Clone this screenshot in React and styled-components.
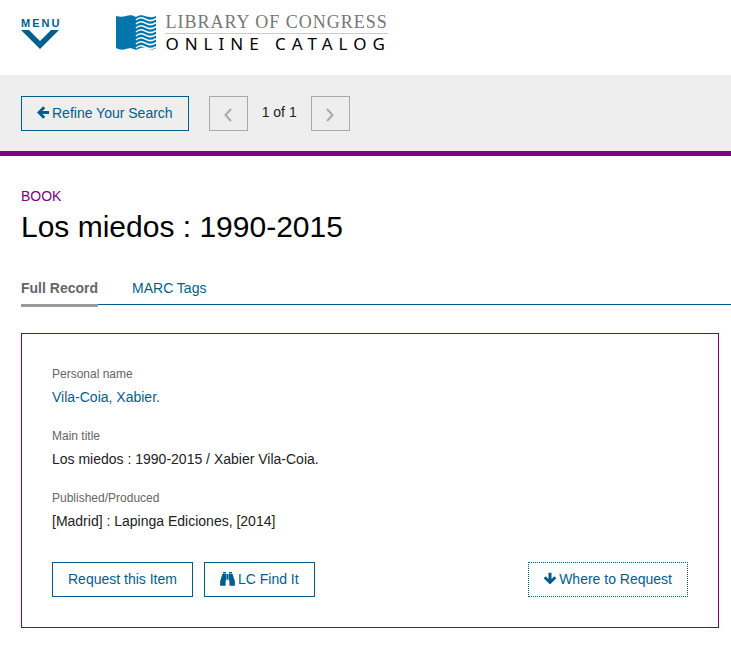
import styled, { createGlobalStyle } from "styled-components";

const fields = [
    { label: "Personal name", value: "Vila-Coia, Xabier.", link: true },
    { label: "Main title", value: "Los miedos : 1990-2015 / Xabier Vila-Coia." },
    { label: "Published/Produced", value: "[Madrid] : Lapinga Ediciones, [2014]" },
];

const waves = [5, 9, 13, 17, 21, 25, 29, 33];

export default function App() {
    return (
        <>
            <GlobalStyle />
            <Header>
                <MenuButton>
                    MENU
                    <svg width="38" height="19" viewBox="0 0 38 19" aria-hidden="true">
                        <path d="M0 0h8l11 11L30 0h8L19 19z" fill="currentColor" />
                    </svg>
                </MenuButton>
                <Brand href="#">
                    <BookLogo />
                    <BrandText>
                        <BrandName>LIBRARY OF CONGRESS</BrandName>
                        <BrandSub>ONLINE CATALOG</BrandSub>
                    </BrandText>
                </Brand>
            </Header>

            <Toolbar>
                <Button>
                    <ArrowIcon />
                    Refine Your Search
                </Button>
                <Pager>
                    <PageButton disabled aria-label="Previous record">
                        <AngleIcon d="M7 1L1.5 7 7 13" />
                    </PageButton>
                    <PageCount>1 of 1</PageCount>
                    <PageButton disabled aria-label="Next record">
                        <AngleIcon d="M1 1l5.5 6L1 13" />
                    </PageButton>
                </Pager>
            </Toolbar>

            <Main>
                <Format>BOOK</Format>
                <Title>Los miedos : 1990-2015</Title>

                <Tabs>
                    <Tab href="#record" $active>Full Record</Tab>
                    <Tab href="#marc">MARC Tags</Tab>
                </Tabs>

                <Record>
                    <FieldList>
                        {fields.map(({ label, value, link }) => (
                            <Field key={label}>
                                <Label>{label}</Label>
                                <Value>{link ? <a href="#name">{value}</a> : value}</Value>
                            </Field>
                        ))}
                    </FieldList>
                    <Actions>
                        <Button>Request this Item</Button>
                        <Button>
                            <BinocularsIcon />
                            LC Find It
                        </Button>
                        <WhereButton>
                            <ArrowIcon $down />
                            Where to Request
                        </WhereButton>
                    </Actions>
                </Record>
            </Main>
        </>
    );
}

function BookLogo() {
    return (
        <svg width="40" height="36" viewBox="0 0 40 36" aria-hidden="true">
            <path
                d="M0 1C4 2 7 2 10 1S17 0 20 2C23 0 26 0 29 1S36 3 40 1V33C36 36 33 34 30 33S24 33 20 35C16 33 13 33 10 34S4 35 0 33z"
                fill="#0076ad"
            />
            {waves.map((y) => (
                <path
                    key={y}
                    d={`M20 ${y}C23 ${y - 3} 27 ${y - 2.5} 30 ${y - 0.6}S37 ${y + 0.6} 40 ${y - 1.4}`}
                    fill="none"
                    stroke="#fff"
                    strokeWidth="1.6"
                />
            ))}
        </svg>
    );
}

function ArrowIcon({ $down }) {
    return (
        <ArrowSvg $down={$down} viewBox="0 0 12 13" aria-hidden="true">
            <path d="M0 6.5L6.2 0.2 8.2 2.2 5.4 5H12V8H5.4L8.2 10.8 6.2 12.8z" />
        </ArrowSvg>
    );
}

function BinocularsIcon() {
    return (
        <svg width="15" height="14" viewBox="0 0 15 14" fill="currentColor" aria-hidden="true">
            <path d="M3 0h3v1.6H3zM9 0h3v1.6H9zM2.4 2.1H6.4V8.4H5.6V13.8H0.1V9.6zM8.6 2.1H12.6L14.9 9.6V13.8H9.4V8.4H8.6zM6.8 2.1h1.4v5.4H6.8z" />
        </svg>
    );
}

function AngleIcon({ d }) {
    return (
        <svg width="8" height="14" viewBox="0 0 8 14" aria-hidden="true">
            <path d={d} fill="none" stroke="currentColor" strokeWidth="2" />
        </svg>
    );
}

const GlobalStyle = createGlobalStyle`
    * {
        box-sizing : border-box;
    }

    body {
        margin : 0;
        background : white;
        color : #222;
        font : 14px/20px Arial, "Liberation Sans", sans-serif;
    }

    button {
        font : inherit;
        cursor : pointer;
    }

    a {
        color : #005f8f;
        text-decoration : none;
    }
`;

const Header = styled.header`
    display : flex;
    align-items : flex-start;
    gap : 55px;
    height : 75px;
    padding : 15px 21px;
`;

const MenuButton = styled.button`
    display : flex;
    flex-direction : column;
    align-items : flex-start;
    gap : 1px;
    padding : 2px 0 0;

    border : 0;
    background : none;
    color : #005f8f;
    font-size : 11px;
    font-weight : bold;
    line-height : 12px;
    letter-spacing : 2px;
`;

const Brand = styled.a`
    display : flex;
    gap : 9px;
`;

const BrandText = styled.span`
    display : flex;
    flex-direction : column;
    align-items : flex-start;
`;

const BrandName = styled.span`
    padding-bottom : 4px;

    border-bottom : 1px solid #ccc;
    color : #777;
    font-family : "Liberation Serif", serif;
    font-size : 18px;
    line-height : 14px;
    letter-spacing : 1px;
`;

const BrandSub = styled.span`
    padding-top : 2px;

    color : black;
    font-family : "Noto Sans", sans-serif;
    font-size : 17px;
    line-height : 16px;
    letter-spacing : 6px;
`;

const Toolbar = styled.div`
    display : flex;
    gap : 20px;
    padding : 21px 21px 20px;

    border-bottom : 5px solid #800080;
    background : #eee;
`;

const Button = styled.button`
    display : flex;
    align-items : center;
    gap : 3px;
    height : 35px;
    padding : 0 15px 2px;

    border : 1px solid #005f8f;
    background : transparent;
    color : #005f8f;
`;

const WhereButton = styled(Button)`
    margin-left : auto;

    border-style : dotted;
`;

const ArrowSvg = styled.svg`
    width : 12px;
    height : 13px;
    transform : ${({ $down }) => ($down ? "rotate(-90deg)" : "none")};

    fill : currentColor;
`;

const Pager = styled.div`
    display : flex;
    gap : 14px;
`;

const PageButton = styled.button`
    display : flex;
    align-items : center;
    justify-content : center;
    width : 39px;
    height : 35px;
    padding : 2px 0 0;

    border : 1px solid #aaa;
    background : transparent;
    color : #aaa;
`;

const PageCount = styled.span`
    line-height : 32px;
`;

const Main = styled.main`
    padding : 30px 0 18px 21px;
`;

const Format = styled.div`
    color : #800080;
`;

const Title = styled.h1`
    margin : 3px 0 0;

    color : black;
    font-size : 30px;
    font-weight : normal;
    line-height : 36px;
`;

const Tabs = styled.nav`
    display : flex;
    gap : 34px;
    margin-top : 33px;

    border-bottom : 1px solid #005f8f;
`;

const Tab = styled.a`
    height : 29px;
    margin-bottom : -3px;

    ${({ $active }) => $active && `
        border-bottom : 3px solid #999;
        color : #666;
        font-weight : bold;
    `}
`;

const Record = styled.section`
    margin : 28px 12px 0 0;
    padding : 30px;

    border : 1px solid #800080;
`;

const FieldList = styled.dl`
    margin : 0;
`;

const Field = styled.div`
    margin-bottom : 16px;
`;

const Label = styled.dt`
    color : #666;
    font-size : 12px;
`;

const Value = styled.dd`
    margin : 0;

    line-height : 26px;
`;

const Actions = styled.div`
    display : flex;
    gap : 11px;
    padding-top : 12px;
`;
